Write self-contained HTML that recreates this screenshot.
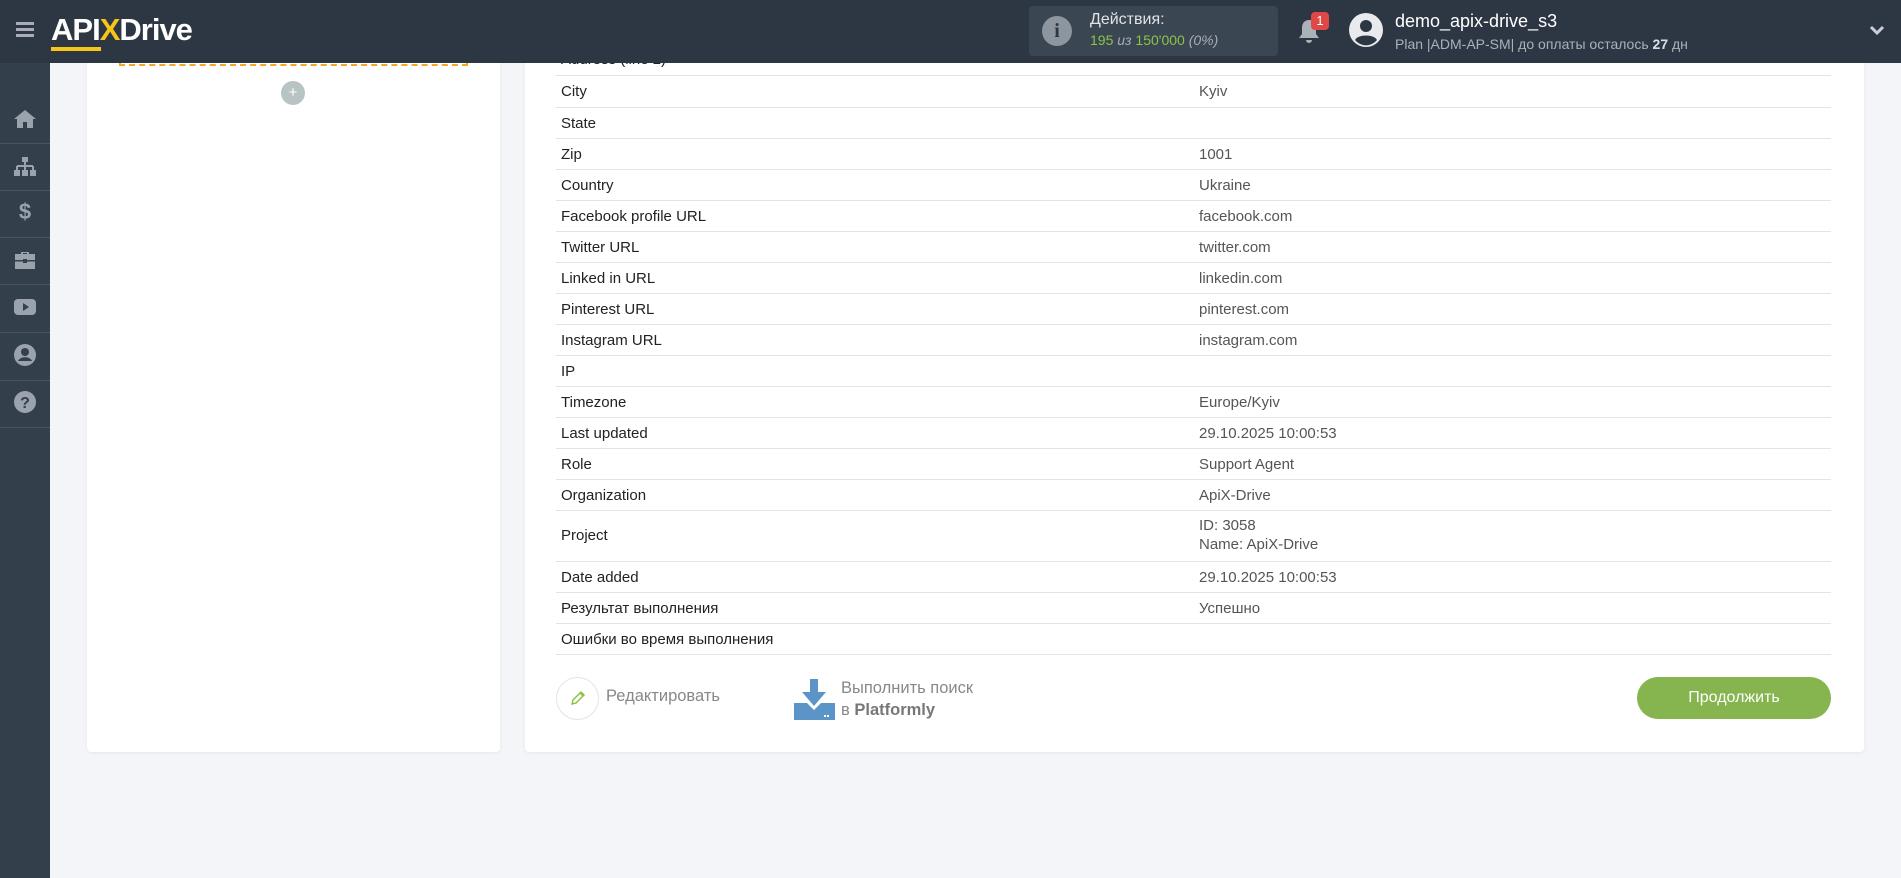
<!DOCTYPE html>
<html><head><meta charset="utf-8"><style>
*{margin:0;padding:0;box-sizing:border-box}
body{width:1901px;height:878px;overflow:hidden;background:#f3f5f9;font-family:"Liberation Sans","Noto Sans CJK SC",sans-serif;position:relative}
.hdr{position:absolute;left:0;top:0;width:1901px;height:63px;background:#2d3744}
.side{position:absolute;left:0;top:63px;width:50px;height:815px;background:#343f4c}
.sep{position:absolute;left:0;width:50px;height:1px;background:#4a5563}
.ic{position:absolute;left:13px;width:24px;height:24px}
.card{position:absolute;background:#fff;border-radius:4px;box-shadow:0 1px 3px rgba(0,0,0,.06)}
.row{position:absolute;left:556px;width:1275px;border-bottom:1px solid #e2e4e8;font-size:15px;color:#222}
.row .l{position:absolute;left:5px}
.row .v{position:absolute;left:643px;color:#555}
</style></head><body>
<div class="card" style="left:87px;top:40px;width:413px;height:712px"></div>
<div style="position:absolute;left:119px;top:40px;width:349px;height:26px;border:2px dashed #f5a623;border-top:none"></div>
<div style="position:absolute;left:281px;top:81px;width:24px;height:24px;border-radius:50%;background:#b8c4c4;color:#fff;font-size:15px;text-align:center;line-height:24px">+</div>
<div class="card" style="left:525px;top:40px;width:1339px;height:712px"></div>

<div class="row" style="top:40px;height:36px"><span class="l" style="top:11px">Address (line 2)</span></div>
<div class="row" style="top:76px;height:32px"><span class="l" style="top:7px">City</span><span class="v" style="top:7px">Kyiv</span></div>
<div class="row" style="top:108px;height:31px"><span class="l" style="top:7px">State</span></div>
<div class="row" style="top:139px;height:31px"><span class="l" style="top:7px">Zip</span><span class="v" style="top:7px">1001</span></div>
<div class="row" style="top:170px;height:31px"><span class="l" style="top:7px">Country</span><span class="v" style="top:7px">Ukraine</span></div>
<div class="row" style="top:201px;height:31px"><span class="l" style="top:7px">Facebook profile URL</span><span class="v" style="top:7px">facebook.com</span></div>
<div class="row" style="top:232px;height:31px"><span class="l" style="top:7px">Twitter URL</span><span class="v" style="top:7px">twitter.com</span></div>
<div class="row" style="top:263px;height:31px"><span class="l" style="top:7px">Linked in URL</span><span class="v" style="top:7px">linkedin.com</span></div>
<div class="row" style="top:294px;height:31px"><span class="l" style="top:7px">Pinterest URL</span><span class="v" style="top:7px">pinterest.com</span></div>
<div class="row" style="top:325px;height:31px"><span class="l" style="top:7px">Instagram URL</span><span class="v" style="top:7px">instagram.com</span></div>
<div class="row" style="top:356px;height:31px"><span class="l" style="top:7px">IP</span></div>
<div class="row" style="top:387px;height:31px"><span class="l" style="top:7px">Timezone</span><span class="v" style="top:7px">Europe/Kyiv</span></div>
<div class="row" style="top:418px;height:31px"><span class="l" style="top:7px">Last updated</span><span class="v" style="top:7px">29.10.2025 10:00:53</span></div>
<div class="row" style="top:449px;height:31px"><span class="l" style="top:7px">Role</span><span class="v" style="top:7px">Support Agent</span></div>
<div class="row" style="top:480px;height:31px"><span class="l" style="top:7px">Organization</span><span class="v" style="top:7px">ApiX-Drive</span></div>
<div class="row" style="top:511px;height:51px"><span class="l" style="top:16px">Project</span><span class="v" style="top:5px;line-height:19px">ID: 3058<br>Name: ApiX-Drive</span></div>
<div class="row" style="top:562px;height:31px"><span class="l" style="top:7px">Date added</span><span class="v" style="top:7px">29.10.2025 10:00:53</span></div>
<div class="row" style="top:593px;height:31px"><span class="l" style="top:7px">Результат выполнения</span><span class="v" style="top:7px">Успешно</span></div>
<div class="row" style="top:624px;height:31px"><span class="l" style="top:7px">Ошибки во время выполнения</span></div>

<div style="position:absolute;left:556px;top:677px;width:43px;height:43px;border-radius:50%;border:1.5px solid #dfe6e2"></div>
<svg style="position:absolute;left:568px;top:688px" width="20" height="20" viewBox="0 0 20 20"><path d="M4 16l1-4 8-8 3 3-8 8z M12 5l3 3" fill="none" stroke="#8bc34a" stroke-width="1.5"/></svg>
<div style="position:absolute;left:606px;top:687px;font-size:16.5px;color:#888">Редактировать</div>
<svg style="position:absolute;left:794px;top:679px" width="41" height="41" viewBox="0 0 41 41"><rect x="16" y="0" width="8" height="14" fill="#5b95c8"/><path d="M8 13h24L20 27z" fill="#5b95c8"/><path d="M0 24h13l7 7 7-7h14v17H0z" fill="#5b95c8"/><rect x="33" y="36" width="2" height="2" fill="#fff"/><rect x="30" y="36" width="2" height="2" fill="#fff"/></svg>
<div style="position:absolute;left:841px;top:677px;font-size:16.5px;color:#888;line-height:22px">Выполнить поиск<br>в <b style="color:#777">Platformly</b></div>
<div style="position:absolute;left:1637px;top:677px;width:194px;height:42px;border-radius:21px;background:#86b54f;color:#fff;font-size:16px;text-align:center;line-height:42px">Продолжить</div>

<div class="hdr">
<div style="position:absolute;left:16px;top:22px;width:18px;height:3px;background:#aab;box-shadow:0 6px 0 #aab,0 12px 0 #aab"></div>
<div style="position:absolute;left:51px;top:12px;font-size:31px;color:#fff;font-weight:bold;letter-spacing:-1px">API<span style="color:#f5c518">X</span>Drive</div>
<div style="position:absolute;left:51px;top:47px;width:50px;height:4px;background:#f5c518"></div>
<div style="position:absolute;left:1029px;top:6px;width:249px;height:50px;border-radius:4px;background:#3a4652"></div>
<div style="position:absolute;left:1042px;top:16px;width:30px;height:30px;border-radius:50%;background:#8d959e;color:#2d3744;font-weight:bold;font-family:'Liberation Serif',serif;font-size:20px;text-align:center;line-height:30px">i</div>
<div style="position:absolute;left:1090px;top:11px;font-size:16px;color:#e0e4e8">Действия:</div>
<div style="position:absolute;left:1090px;top:32px;font-size:14px;color:#8bc34a">195 <i style="color:#aab">из</i> 150'000 <i style="color:#aab">(0%)</i></div>
<svg style="position:absolute;left:1297px;top:18px" width="24" height="28" viewBox="0 0 24 28"><path d="M12 2c-5 0-7 4-7 8v6l-3 4h20l-3-4v-6c0-4-2-8-7-8z M9 22a3 3 0 006 0z" fill="#aab1b9"/></svg>
<div style="position:absolute;left:1311px;top:12px;width:18px;height:18px;border-radius:4px;background:#e04848;color:#fff;font-size:13px;text-align:center;line-height:18px">1</div>
<svg style="position:absolute;left:1349px;top:13px" width="34" height="34" viewBox="0 0 34 34"><circle cx="17" cy="17" r="17" fill="#e8eaed"/><circle cx="17" cy="13" r="6" fill="#2d3744"/><path d="M6 27c3-6 19-6 22 0a14 14 0 01-22 0z" fill="#2d3744"/></svg>
<div style="position:absolute;left:1395px;top:11px;font-size:18px;color:#fff">demo_apix-drive_s3</div>
<div style="position:absolute;left:1395px;top:36px;font-size:14px;color:#aab1b9">Plan |ADM-AP-SM| до оплаты осталось <b style="color:#dde">27</b> дн</div>
<svg style="position:absolute;left:1869px;top:25px" width="16" height="12" viewBox="0 0 16 12"><path d="M2 2l6 6 6-6" fill="none" stroke="#ccd" stroke-width="3"/></svg>
</div>

<div class="side">
<div class="sep" style="top:80px"></div><div class="sep" style="top:127px"></div><div class="sep" style="top:174px"></div><div class="sep" style="top:221px"></div><div class="sep" style="top:269px"></div><div class="sep" style="top:317px"></div><div class="sep" style="top:364px"></div>
<svg class="ic" style="top:44px" viewBox="0 0 24 24"><path d="M12 3L1 12h3v9h6v-6h4v6h6v-9h3z" fill="#9aa3ad"/></svg>
<svg class="ic" style="top:92px" viewBox="0 0 24 24"><rect x="9" y="2" width="6" height="5" fill="#9aa3ad"/><path d="M12 7v4M4 11h16M4 11v4M12 11v4M20 11v4" stroke="#9aa3ad" stroke-width="2"/><rect x="1" y="15" width="6" height="6" fill="#9aa3ad"/><rect x="9" y="15" width="6" height="6" fill="#9aa3ad"/><rect x="17" y="15" width="6" height="6" fill="#9aa3ad"/></svg>
<div class="ic" style="top:136px;color:#9aa3ad;font-weight:bold;font-size:22px;text-align:center">$</div>
<svg class="ic" style="top:186px" viewBox="0 0 24 24"><path d="M8 5V3h8v2h6v15H2V5zM10 5h4V4h-4z" fill="#9aa3ad"/><rect x="2" y="11" width="20" height="1.5" fill="#343f4c"/><rect x="10" y="10" width="4" height="4" fill="#343f4c"/></svg>
<svg class="ic" style="top:232px" viewBox="0 0 24 24"><rect x="1" y="4" width="22" height="16" rx="4" fill="#9aa3ad"/><path d="M10 8v8l6-4z" fill="#343f4c"/></svg>
<svg class="ic" style="top:280px" viewBox="0 0 24 24"><circle cx="12" cy="12" r="11" fill="#9aa3ad"/><circle cx="12" cy="9" r="4" fill="#343f4c"/><path d="M5 18c2-5 12-5 14 0" fill="#343f4c"/></svg>
<svg class="ic" style="top:327px" viewBox="0 0 24 24"><circle cx="12" cy="12" r="11" fill="#9aa3ad"/><text x="12" y="18" font-size="16" font-weight="bold" text-anchor="middle" fill="#343f4c" font-family="Liberation Sans">?</text></svg>
</div>
</body></html>
